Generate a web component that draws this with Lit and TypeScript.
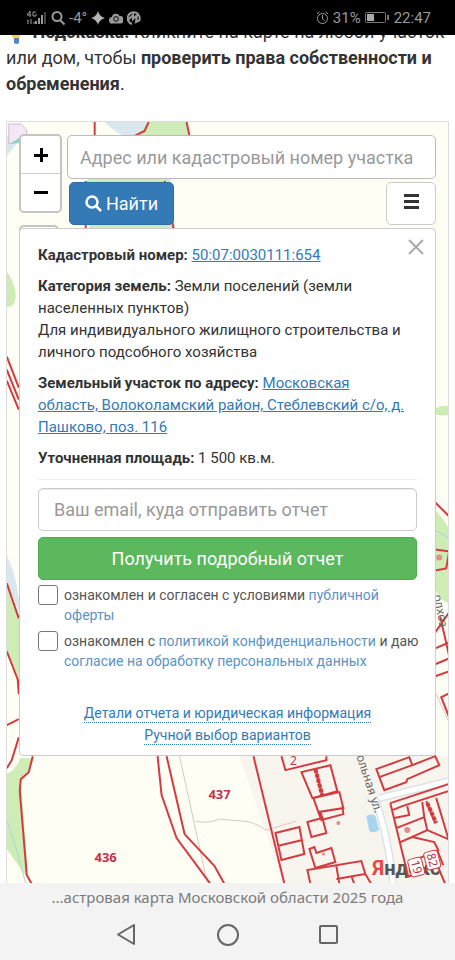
import { LitElement, html, css, svg } from "lit";
import { customElement } from "lit/decorators.js";

@customElement("status-bar")
class StatusBar extends LitElement {
  static styles = css`
    :host { display: flex; align-items: center; justify-content: space-between; height: 35px; box-sizing: border-box;
      padding: 0 24px 0 26px; background: #000; color: #9a9a9a; font: 15px/20px Roboto, sans-serif; position: relative; z-index: 3; }
    .side { display: flex; align-items: center; gap: 4px; }
    svg { display: block; }
  `;
  render() {
    return html`
      <div class="side">
        <svg width="21" height="16" viewBox="0 0 21 16" fill="#9a9a9a">
          <path d="M4 1 1 5h4M4 1v6M10 2H7v4h3V4M2 10v4M1 11l1-1M5 9v5M8 12v2" fill="none" stroke="#9a9a9a"/>
          <path d="M9 11h2v3H9zM12 8h2v6h-2zM15 5h2v9h-2z"/><path d="M18 2h2v12h-2z" fill="#444"/>
        </svg>
        <svg width="14" height="16" viewBox="0 0 14 16" fill="none" stroke="#9a9a9a" stroke-width="2"><circle cx="6" cy="6.500" r="4.500"/><path d="M9 10l4.500 4.500"/></svg>
        <span>-4°</span>
        <svg width="14" height="16" viewBox="0 0 14 16" fill="#b4b4b4"><path d="M7 1q1.500 5.500 7 7-5.500 1.500-7 7-1.500-5.500-7-7 5.500-1.500 7-7z"/></svg>
        <svg width="14" height="16" viewBox="0 0 15 16"><path d="M4 14a3.500 3.500 0 0 1-1-7 4.500 4.500 0 0 1 8.500-1A4 4 0 0 1 12 14z" fill="#9a9a9a"/><circle cx="7.500" cy="9" r="2.500" fill="none" stroke="#000"/></svg>
        <svg width="14" height="16" viewBox="0 0 14 16" fill="none" stroke="#9a9a9a" stroke-width="2"><path d="M5 14A6 6 0 1 1 12 11M1 10l5-5v4l4-4-1 7 4-2"/></svg>
      </div>
      <div class="side">
        <svg width="13" height="16" viewBox="0 0 13 16" fill="none" stroke="#9a9a9a"><circle cx="6.500" cy="8.500" r="5"/><path d="M6.500 5v4l2 1.500M1 4l2.500-2M12 4 9.500 2"/></svg>
        <span>31%</span>
        <svg width="25" height="13" viewBox="0 0 25 13"><rect x=".5" y="1.500" width="20" height="10" rx="1" fill="none" stroke="#777"/><path d="M2 3h7v7H2z" fill="#aaa"/><path d="M22 4h2v5h-2z" fill="#777"/></svg>
        <span>22:47</span>
      </div>`;
  }
}

const parcels = [
  "M95 121v14M86 180v48", "M149 121l-4 9-12 6M187 121l3 14M165 180l9 48",
  "M7 356l12 31M7 369l12 30M7 380l12 29", "M7 583l12 35M7 651l12 31M18 680l1 14M7 725l12-6M19 737l-7 23-5 8",
  "M33 756l-4 16-8 7-1 12 7 84 5 9", "M158 756l4 39 15 43 34 46", "M167 756l18 78 30 32 10 18",
  "M254 756l31 128",
  "M282 756l4 14 41-10v-4",
  "M302 772l29-7 7 26-25 7zM316 768l7 28",
  "M314 798l26-6 4 16-25 4zM319 812l3 8 22-6-1-8M321 812l2 6",
  "M308 822l15-4 4 15-15 4z",
  "M276 833l24-6 5 27-23 6zM278 846l25-6",
  "M310 849l5-2 2 6 15-5 4 14-20 6z",
  "M311 884l-3-14 54-9 4 13-29 5M337 866l3 18M352 876l3 8M366 874l6 10",
  "M377 769l33-12 3 8 23-9 4 9-32 14-1 3-22 8zM380 777l33-12",
  "M391 803l58-19M393 810l10-4 46-15M391 803l18 74M395 818l15-3-2-9M397 828l28-11-2-15M401 842l27-12-3-13M401 842l12-5 22 5 4 8-28 12M428 830l21 9",
  "M427 801l9 22M437 798l12 40M408 877l30-12 8 19M438 850l6 15",
  "M436 502l14 14M436 549l14 2-3 17-11 2M436 632l14-20M436 648l14-6M436 664l14-6M436 676l14-5M441 616l9 40M450 693l-8 4 8 20"
];

@customElement("cadastral-map")
class CadastralMap extends LitElement {
  static styles = css`
    :host { display: block; }
    svg { display: block; width: 100%; height: 100%; }
    .num { font: bold 13px "Noto Sans", sans-serif; fill: #c2334d; text-anchor: middle; }
    .small { font: 12px "Noto Sans", sans-serif; fill: #b5364a; text-anchor: middle; }
    .street { font: 12px "Noto Sans", sans-serif; fill: #666; }
    .brand { font: bold 20px Roboto, sans-serif; fill: #555; }
    .brand-first { fill: #ef4444; }
    .credit { font: 13px "Liberation Sans", sans-serif; fill: #333; }
  `;
  render() {
    return html`<svg viewBox="7 121 442 762" preserveAspectRatio="xMidYMin slice" aria-hidden="true">
      <path d="M7 121h442v762H7z" fill="#fffef5"/>
      <path d="M240 756h209v127H284z" fill="#f8f5ef"/>
      <path d="M149 121h38l3 20-20 40 6 48H90l-4-48 40-44z" fill="#cdecb8"/>
      <path d="M105 121h42q-12 30-42 0M7 135q12 2 12 5L7 155z" fill="#d8e8ee"/>
      <path d="M9 123h12l6 6v7l-9 4-9 3z" fill="#f4e8f7" stroke="#c9bfd0"/><path d="M10 143l9-6 5 2-4 3z" fill="#8fd3c8"/>
      <path d="M7 271q7 8 9 22 0 14-9 13zM449 405q-12 0-14 5 0 7 14 4zM435 508q14 16 14 20v75q-10-4-14-18zM7 583l13 35v66L7 651zM20 758h14l-5 15-8 7 7 90-2 6-19-27v-75q11-6 13-16z" fill="#cdedb5"/>
      <path d="M7 555q12 25 13 58L7 583z" fill="#d8e8ee"/>
      <path d="M7 820q12 35 19 64M435 529l14 8" fill="none" stroke="#aad5df"/>
      <path d="M180 756l28 128M196 821q12 3 24-2l23 2q10 0 24 9l30-9M435 690l14 30" fill="none" stroke="#d8c9b8"/>
      <path d="M380 798l70-17M376 800q12 32 18 84" fill="none" stroke="#dde2e6" stroke-width="8"/>
      <path d="M380 798l70-17M376 800q12 32 18 84" fill="none" stroke="#fff" stroke-width="5"/>
      <path d="M367 816q6-3 9 0l4 14q-6 4-10 1z" fill="#a8d5ee"/>
      <text class="brand" x="373" y="875"><tspan class="brand-first">Я</tspan>ндекс</text>
      ${parcels.map((d) => svg`<path d=${d} fill="none" stroke="#d43b40" stroke-width="2"/>`)}
      <path d="M316 769l7 27M428 803l9 20" stroke="#d43b40" stroke-width="4" stroke-dasharray="4 1"/>
      <g fill="#e58b8b"><circle cx="339" cy="823" r="2"/><circle cx="324" cy="854" r="1.500"/><circle cx="408" cy="830" r="3"/><circle cx="440" cy="557" r="3"/></g>
      <text class="num" x="106" y="862">436</text><text class="num" x="220" y="799">437</text>
      <text class="small" x="294" y="765">2</text>
      <g transform="translate(417 867) rotate(75)"><rect x="-9" y="-7" width="18" height="14" rx="3" fill="#fff" stroke="#d43b40"/><text class="small" y="4">19</text></g>
      <g transform="translate(433 860) rotate(75)"><rect x="-9" y="-7" width="18" height="14" rx="3" fill="#fff" stroke="#d43b40"/><text class="small" y="4">82</text></g>
      <text class="street" transform="translate(357 756) rotate(72)">ольная ул.</text>
      <text class="street" transform="translate(434 595) rotate(78)">олхоз</text>
      <text class="credit" x="229" y="893">© Яндекс Условия использования</text>
    </svg>`;
  }
}

@customElement("parcel-panel")
class ParcelPanel extends LitElement {
  static styles = css`
    :host { display: block; position: relative; background: #fff; border: 1px solid #ccc; border-radius: 4px;
      padding: 15px 18px 10px; color: #333; font: 15px/22px Roboto, sans-serif; box-sizing: border-box; }
    p { margin: 0 0 9px; padding-right: 5px; }
    b { font-weight: 700; }
    a { color: #337ab7; }
    .close { position: absolute; top: 9px; right: 10px; width: 18px; height: 18px; padding: 1px; border: 0; background: none; }
    .close svg { display: block; }
    form { border-top: 1px solid #eee; margin-top: 10px; padding-top: 8px; display: flex; flex-direction: column; }
    .email { height: 43px; box-sizing: border-box; width: 100%; border: 1px solid #ccc; border-radius: 5px; padding: 0 15px;
      font: 18px Roboto, sans-serif; color: #555; box-shadow: inset 0 1px 1px rgba(0,0,0,.08); }
    .email::placeholder { color: #999; opacity: 1; }
    .submit { height: 43px; margin: 6px 0 5px; border: 1px solid #4cae4c; border-radius: 5px; background: #5cb85c; color: #fff;
      font: 18px Roboto, sans-serif; }
    .agree { display: flex; gap: 6px; align-items: flex-start; font-size: 14px; line-height: 20px; color: #555; margin-bottom: 6px; }
    .agree label { white-space: nowrap; }
    .agree a { color: #5c93c4; text-decoration: none; }
    .agree input { appearance: none; box-sizing: border-box; width: 20px; height: 20px; margin: 0; flex: none;
      border: 1px solid #767676; border-radius: 3px; background: #fff; }
    .more { display: flex; flex-direction: column; align-items: center; gap: 4px; margin-top: 28px; font-size: 14px; line-height: 17px; }
    .more a { text-decoration: none; border-bottom: 1px dotted #337ab7; }
  `;
  render() {
    return html`
      <button class="close" aria-label="Закрыть"><svg width="16" height="16" viewBox="0 0 16 16" stroke="#aaa" stroke-width="2"><path d="M1 1l14 14M15 1 1 15"/></svg></button>
      <p><b>Кадастровый номер:</b> <a href="#">50:07:0030111:654</a></p>
      <p><b>Категория земель:</b> Земли поселений (земли населенных пунктов)<br>Для индивидуального жилищного строительства и личного подсобного хозяйства</p>
      <p><b>Земельный участок по адресу:</b> <a href="#">Московская<br>область, Волоколамский район, Стеблевский с/о, д.<br>Пашково, поз. 116</a></p>
      <p><b>Уточненная площадь:</b> 1 500 кв.м.</p>
      <form>
        <input class="email" type="email" placeholder="Ваш email, куда отправить отчет" aria-label="Ваш email">
        <button class="submit" type="button">Получить подробный отчет</button>
        <div class="agree"><input id="offer" type="checkbox"><label for="offer">ознакомлен и согласен с условиями <a href="#">публичной<br>оферты</a></label></div>
        <div class="agree"><input id="privacy" type="checkbox"><label for="privacy">ознакомлен с <a href="#">политикой конфиденциальности</a> и даю<br><a href="#">согласие на обработку персональных данных</a></label></div>
      </form>
      <div class="more"><a href="#">Детали отчета и юридическая информация</a><a href="#">Ручной выбор вариантов</a></div>`;
  }
}

@customElement("app-root")
class AppRoot extends LitElement {
  static styles = css`
    :host { display: flex; flex-direction: column; height: 100vh; background: #fff; font-family: Roboto, sans-serif; color: #333; }
    main { flex: 1; min-height: 0; overflow: hidden; display: flex; flex-direction: column; padding: 0 6px; }
    .hint { margin: -16px 0 24px; font-size: 18px; line-height: 26px; flex: none; }
    .bulb { display: inline-block; width: 22px; height: 22px; vertical-align: middle; }
    .map { flex: 1; position: relative; border: 1px solid #ddd; border-bottom: 0; overflow: hidden; padding: 12px 12px 0; }
    cadastral-map { position: absolute; inset: 0; }
    .tools { position: relative; display: flex; gap: 5px; height: 94px; }
    .left { width: 43px; display: flex; flex-direction: column; gap: 12px; flex: none; }
    .zoom { border: 2px solid #c4c4c0; border-radius: 5px; overflow: hidden; display: flex; flex-direction: column; flex: none; }
    .zoom button { height: 37px; border: 0; padding: 0; background: #fff; display: grid; place-items: center; }
    .zoom button + button { height: 38px; border-top: 1px solid #ccc; }
    .layers { height: 38px; width: 40px; flex: none; border: 2px solid #c4c4c0; border-radius: 5px; background: #fff; }
    .right { flex: 1; min-width: 0; padding-top: 1px; }
    .search { display: block; width: 100%; height: 44px; box-sizing: border-box; border: 1px solid #bbb; border-radius: 5px; padding: 0 12px;
      font: 18px Roboto, sans-serif; color: #555; background: #fff; }
    .search::placeholder { color: #999; opacity: 1; }
    .row { display: flex; justify-content: space-between; padding: 3px 0 0 2px; }
    .find { height: 43px; width: 105px; border: 1px solid #2e6da4; border-radius: 5px; background: #337ab7; color: #fff; font: 18px Roboto, sans-serif;
      display: flex; align-items: center; justify-content: center; gap: 4px; padding: 0; }
    .menu { height: 43px; width: 50px; border: 1px solid #ccc; border-radius: 5px; background: #fff; padding: 0 0 4px; display: grid; place-items: center; }
    parcel-panel { position: relative; }
    footer { flex: none; height: 77px; background: #f3f3f3; display: flex; flex-direction: column; align-items: center; }
    .title { font: 15px/20px "Noto Sans", sans-serif; color: #7a7a7a; padding-top: 4px; }
    nav { width: 100%; display: flex; justify-content: center; gap: 77px; padding-top: 16px; }
    nav button { border: 0; background: none; padding: 0; width: 24px; height: 24px; }
    svg { display: block; }
  `;
  render() {
    return html`
      <status-bar></status-bar>
      <main>
        <p class="hint"><svg class="bulb" viewBox="0 0 22 22"><path d="M4 8a6 6 0 0 1 12 0q0 4-3 8H7Q4 12 4 8z" fill="#f5d33d"/><path d="M8 16h5v5q-2 2-5 0z" fill="#4f88c8"/></svg>
          <b>Подсказка:</b> Кликните на карте на любой участок или дом, чтобы <b>проверить права собственности и обременения</b>.</p>
        <section class="map">
          <cadastral-map></cadastral-map>
          <div class="tools">
            <div class="left">
              <div class="zoom">
                <button aria-label="Приблизить"><svg width="14" height="14" viewBox="0 0 14 14" fill="#000"><path d="M0 6h6V0h3v6h5v3H9v5H6V9H0z"/></svg></button>
                <button aria-label="Отдалить"><svg width="14" height="3" viewBox="0 0 14 3"><path d="M0 0h14v3H0z"/></svg></button>
              </div>
              <button class="layers" aria-label="Слои"></button>
            </div>
            <div class="right">
              <input class="search" type="text" placeholder="Адрес или кадастровый номер участка" aria-label="Адрес или кадастровый номер участка">
              <div class="row">
                <button class="find"><svg width="17" height="17" viewBox="0 0 17 17" fill="none" stroke="#fff" stroke-width="2.500"><circle cx="7" cy="7" r="5.500"/><path d="M11 11l5 5"/></svg>Найти</button>
                <button class="menu" aria-label="Меню"><svg width="15" height="15" viewBox="0 0 15 15" fill="#333"><path d="M0 0h15v3H0zM0 6h15v3H0zM0 12h15v3H0z"/></svg></button>
              </div>
            </div>
          </div>
          <parcel-panel></parcel-panel>
        </section>
      </main>
      <footer>
        <div class="title">...астровая карта Московской области 2025 года</div>
        <nav>
          <button aria-label="Назад"><svg width="24" height="24" viewBox="0 0 24 24" fill="none" stroke="#666" stroke-width="2" stroke-linejoin="round"><path d="M19 2v19L3 11.500z"/></svg></button>
          <button aria-label="Домой"><svg width="24" height="24" viewBox="0 0 24 24" fill="none" stroke="#666" stroke-width="2"><circle cx="12" cy="12" r="10"/></svg></button>
          <button aria-label="Недавние"><svg width="24" height="24" viewBox="0 0 24 24" fill="none" stroke="#666" stroke-width="2"><rect x="3" y="3" width="17" height="17" rx="1"/></svg></button>
        </nav>
      </footer>`;
  }
}
